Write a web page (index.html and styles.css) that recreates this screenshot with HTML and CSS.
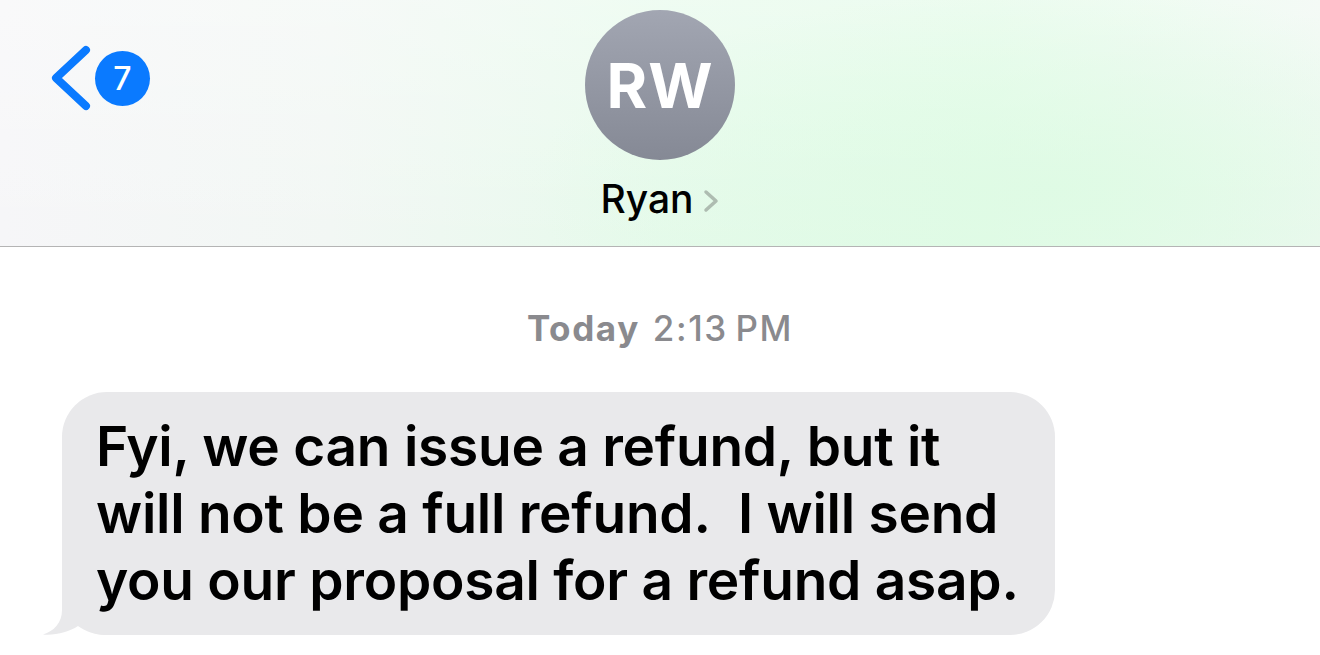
FILE: index.html
```html
<!DOCTYPE html>
<html lang="en">
<head>
    <meta charset="UTF-8">
    <meta name="viewport" content="width=device-width, initial-scale=1.0">
    <title>Ryan</title>
    <link rel="stylesheet" href="styles.css">
</head>
<body>
    <!-- Cabeçalho da conversa -->
    <header class="topbar">
        <div class="back">
            <svg class="back-arrow" width="44" height="68" viewBox="0 0 44 68">
                <path d="M38 6 L8 34 L38 62" fill="none" stroke="#0a7aff" stroke-width="8" stroke-linecap="round" stroke-linejoin="round"/>
            </svg>
            <span class="badge">7</span>
        </div>

        <div class="contact">
            <div class="avatar">RW</div>
            <div class="name">
                Ryan
                <svg class="name-chevron" width="18" height="24" viewBox="0 0 18 24">
                    <path d="M4 3 L14 12 L4 21" fill="none" stroke="#aebcb1" stroke-width="3.5" stroke-linecap="round" stroke-linejoin="round"/>
                </svg>
            </div>
        </div>

        <div></div>
    </header>

    <!-- Mensagens -->
    <main class="thread">
        <p class="stamp"><strong>Today</strong> 2:13&#8201;PM</p>

        <div class="bubble">
            Fyi, we can issue a refund, but it<br>
            will not be a full refund.&nbsp; I will send<br>
            you our proposal for a refund asap.
            <svg class="tail" width="66" height="45" viewBox="0 0 66 45">
                <path d="M20 0 L20 20 C20 33 12 41 1 44.5 C14 45.5 27 42 36 36 C44 42 53 44.5 62 45 L66 45 L66 0 Z" fill="#e9e9eb"/>
            </svg>
        </div>
    </main>
</body>
</html>
```

FILE: styles.css
```css
body {
    margin: 0;
    background: #ffffff;
    font-family: Inter, "Noto Sans", sans-serif;
    color: #000;
}
.topbar {
    height: 246px;
    display: grid;
    grid-template-columns: 1fr auto 1fr;
    border-bottom: 1px solid #b4b4b4;
    background:
        radial-gradient(ellipse 520px 200px at 1050px 190px, rgba(222, 251, 228, 0.9), rgba(222, 251, 228, 0) 100%),
        linear-gradient(to bottom, rgba(255, 255, 255, 0.35), rgba(255, 255, 255, 0)),
        linear-gradient(to right, #f6f6f8 0%, #f2f7f4 25%, #e6faeb 50%, #e2fbe7 75%, #eef8f1 100%);
}
.back {
    display: flex;
    align-items: center;
    padding: 44px 0 0 48px;
    align-self: start;
}
.badge {
    width: 55px;
    height: 55px;
    margin-left: 3px;
    border-radius: 50%;
    background: #0a7aff;
    color: #fff;
    font-size: 32px;
    font-weight: 500;
    display: flex;
    align-items: center;
    justify-content: center;
}
.contact {
    display: flex;
    flex-direction: column;
    align-items: center;
    padding-top: 10px;
}
.avatar {
    width: 150px;
    height: 150px;
    border-radius: 50%;
    background: linear-gradient(to bottom, #a2a6b2, #858995);
    color: #fff;
    font-size: 62px;
    font-weight: 700;
    letter-spacing: 1px;
    display: flex;
    align-items: center;
    justify-content: center;
}
.name {
    margin-top: 15px;
    font-size: 39px;
    font-weight: 500;
    display: flex;
    align-items: center;
    gap: 8px;
}
.name-chevron {
    margin-top: 4px;
}
.thread {
    padding: 0 62px;
}
.stamp {
    margin: 60px 0 43px;
    text-align: center;
    font-size: 35px;
    letter-spacing: 1.6px;
    color: #8a8a8e;
    font-weight: 500;
}
.stamp strong {
    font-weight: 700;
    margin-right: 2px;
}
.bubble {
    position: relative;
    z-index: 0;
    box-sizing: border-box;
    width: 993px;
    padding: 21px 30px 21px 34px;
    background: #e9e9eb;
    border-radius: 45px;
    font-size: 55px;
    font-weight: 600;
    letter-spacing: -0.25px;
    line-height: 67px;
}
.tail {
    position: absolute;
    z-index: -1;
    left: -20px;
    bottom: 0;
}
```
